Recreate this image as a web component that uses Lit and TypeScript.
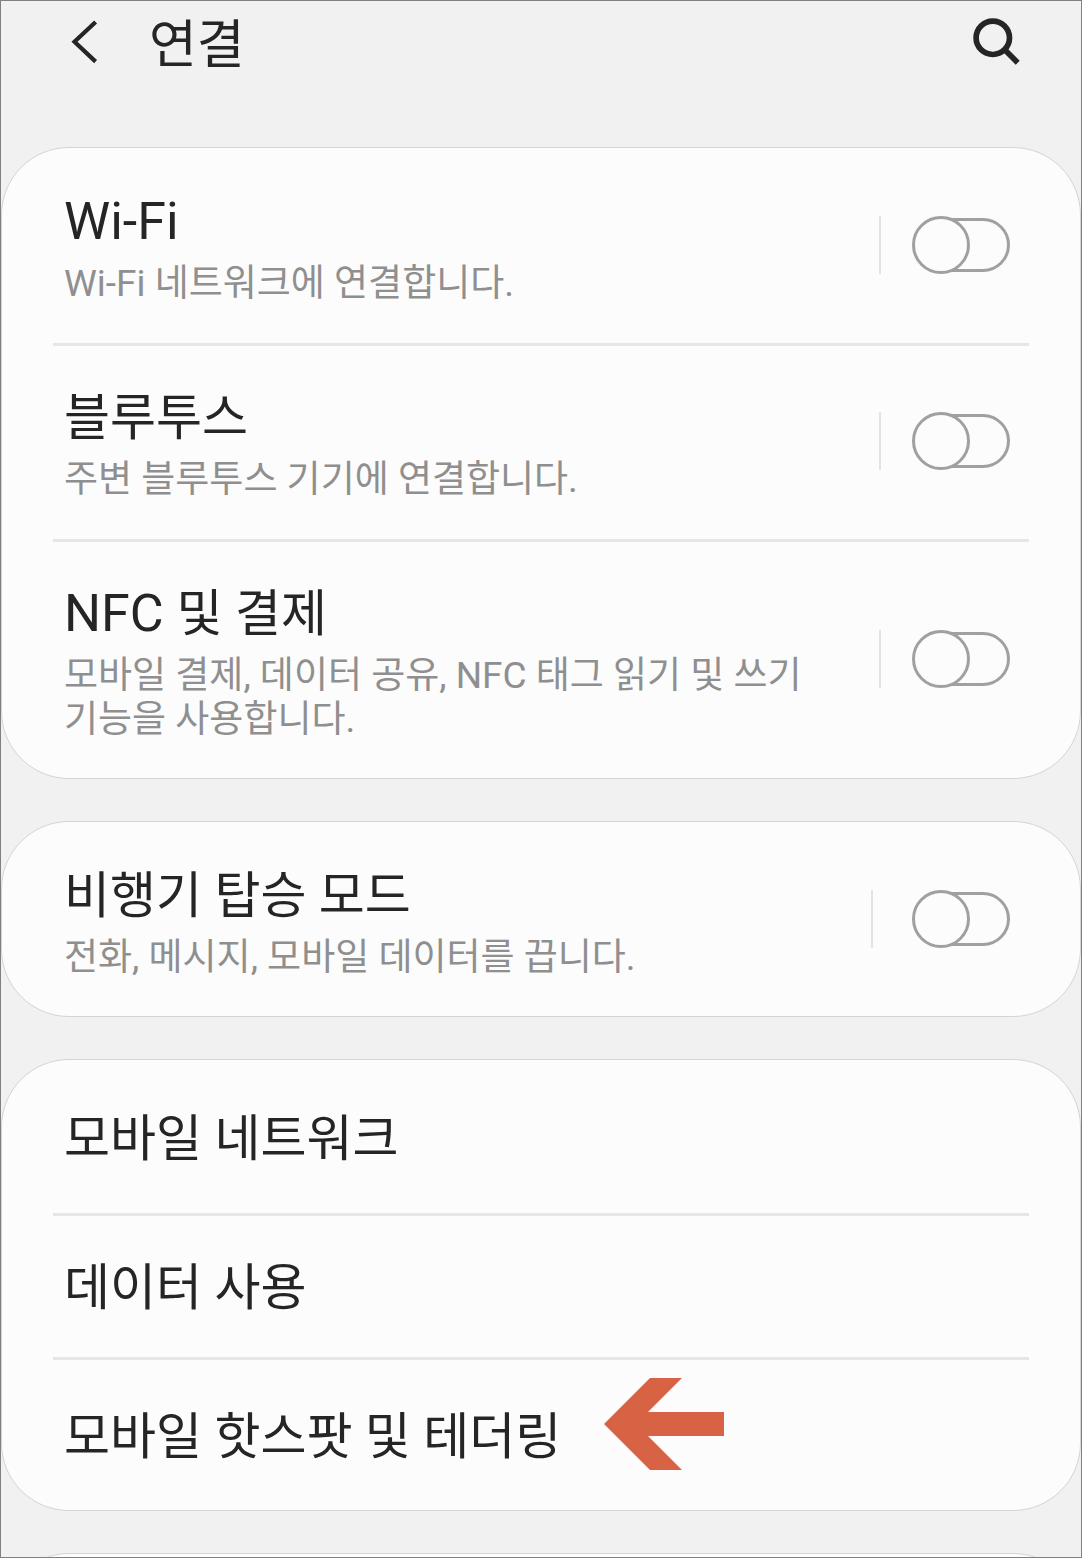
import { LitElement, html, css, nothing } from "lit";
import { customElement, property } from "lit/decorators.js";

interface Setting {
  id: string;
  title: string;
  detail?: string;
  wide?: boolean;
  marked?: boolean;
}

const GROUPS: Setting[][] = [
  [
    { id: "wifi", title: "Wi-Fi", detail: "Wi-Fi 네트워크에 연결합니다." },
    { id: "bluetooth", title: "블루투스", detail: "주변 블루투스 기기에 연결합니다." },
    {
      id: "nfc",
      title: "NFC 및 결제",
      detail: "모바일 결제, 데이터 공유, NFC 태그 읽기 및 쓰기 기능을 사용합니다.",
    },
  ],
  [
    {
      id: "airplane",
      title: "비행기 탑승 모드",
      detail: "전화, 메시지, 모바일 데이터를 끕니다.",
      wide: true,
    },
  ],
  [
    { id: "network", title: "모바일 네트워크" },
    { id: "usage", title: "데이터 사용" },
    { id: "hotspot", title: "모바일 핫스팟 및 테더링", marked: true },
  ],
];

/** Wraps Latin words so that they can be set slightly larger than the Hangul around them. */
const mixed = (text: string) =>
  text
    .split(/([A-Za-z][A-Za-z-]*\s*)/)
    .map((part) => (/^[A-Za-z]/.test(part) ? html`<span class="latin">${part}</span>` : part));

@customElement("setting-toggle-row")
export class SettingToggleRow extends LitElement {
  @property({ attribute: false }) setting!: Setting;

  static styles = css`
    :host {
      display: block;
    }
    .row {
      display: flex;
      align-items: center;
      padding: 39px 70px 36px 62px;
    }
    .text {
      flex: 1;
      min-width: 0;
      display: flex;
      flex-direction: column;
      gap: 7px;
      word-break: keep-all;
    }
    .title {
      font-size: 50px;
      line-height: 66px;
      color: #252525;
    }
    .latin {
      font-size: 52px;
      line-height: 1;
    }
    .detail {
      font-size: 37px;
      line-height: 44px;
      color: #8f8f8f;
    }
    .side {
      flex: none;
      display: flex;
      align-items: center;
      gap: 31px;
      margin-bottom: 5px;
    }
    .side.wide {
      gap: 39px;
    }
    .rule {
      width: 2px;
      height: 58px;
      background: #e4e4e4;
    }
    .switch {
      appearance: none;
      position: relative;
      width: 98px;
      height: 58px;
      margin: 0;
      cursor: pointer;
    }
    .switch::before,
    .switch::after {
      content: "";
      position: absolute;
      box-sizing: border-box;
      border: 3px solid #a0a0a0;
      background: #fcfcfc;
    }
    .switch::before {
      inset: 2px 0 2px 6px;
      border-radius: 27px;
    }
    .switch::after {
      top: 0;
      left: 0;
      width: 58px;
      height: 58px;
      border-radius: 50%;
    }
    .switch:checked::before {
      inset: 2px 6px 2px 0;
      background: #3e91ff;
    }
    .switch:checked::after {
      left: 40px;
    }
  `;

  render() {
    const { id, title, detail, wide } = this.setting;
    return html`
      <div class="row">
        <label class="text" for=${id}>
          <span class="title">${mixed(title)}</span>
          <span class="detail">${detail}</span>
        </label>
        <div class="side ${wide ? "wide" : ""}">
          <span class="rule"></span>
          <input class="switch" type="checkbox" role="switch" id=${id} />
        </div>
      </div>
    `;
  }
}

@customElement("setting-link-row")
export class SettingLinkRow extends LitElement {
  @property({ attribute: false }) setting!: Setting;

  static styles = css`
    :host {
      display: flex;
    }
    .row {
      flex: 1;
      display: flex;
      align-items: center;
      padding: 4px 62px 0;
      gap: 43px;
      font-size: 50px;
      line-height: 66px;
      color: #252525;
      text-decoration: none;
    }
    .arrow {
      flex: none;
      align-self: flex-start;
      width: 120px;
      height: 92px;
      margin-top: 14px;
      fill: #d86344;
    }
  `;

  render() {
    const { id, title, marked } = this.setting;
    return html`
      <a class="row" href="#${id}">
        <span>${title}</span>
        ${marked
          ? html`<svg class="arrow" viewBox="0 0 120 92" aria-hidden="true">
              <path d="M0 46 46 0H78L44 34H120V58H44L78 92H46Z" />
            </svg>`
          : nothing}
      </a>
    `;
  }
}

@customElement("app-root")
export class AppRoot extends LitElement {
  static styles = css`
    :host {
      display: flex;
      flex-direction: column;
      box-sizing: border-box;
      height: 100vh;
      border: 1px solid #808080;
      background: #f1f1f1;
      font-family: Roboto, "Noto Sans CJK KR", sans-serif;
      color: #252525;
    }
    .bar {
      flex: none;
      display: flex;
      align-items: center;
      height: 84px;
      padding: 0 52px 0 61px;
      margin-bottom: 62px;
    }
    .icon-button {
      flex: none;
      display: flex;
      padding: 0;
      border: 0;
      background: none;
      color: inherit;
      cursor: pointer;
    }
    .icon {
      width: 64px;
      height: 64px;
      margin-bottom: 2px;
      fill: none;
      stroke: currentColor;
    }
    .heading {
      flex: 1;
      margin: 0 0 0 23px;
      padding-top: 6px;
      font-size: 52px;
      line-height: 66px;
      font-weight: 400;
    }
    .list {
      flex: 1;
      min-height: 0;
      overflow-y: auto;
      scrollbar-width: none;
      display: flex;
      flex-direction: column;
      gap: 42px;
    }
    .card {
      flex: none;
      padding-top: 2px;
      border: 1px solid #d4d4d4;
      border-radius: 68px;
      background: #fcfcfc;
    }
    .divider {
      height: 3px;
      margin: 1px 51px 0;
      border: 0;
      background: #e6e6e6;
    }
    .link {
      min-height: 140px;
    }
    .link:first-child,
    .link:last-child {
      min-height: 150px;
    }
    .next {
      min-height: 190px;
    }
  `;

  private row(setting: Setting, index: number) {
    return html`${index > 0 ? html`<hr class="divider" />` : nothing}${setting.detail
      ? html`<setting-toggle-row .setting=${setting}></setting-toggle-row>`
      : html`<setting-link-row class="link" .setting=${setting}></setting-link-row>`}`;
  }

  render() {
    return html`
      <header class="bar">
        <button class="icon-button" aria-label="뒤로">
          <svg class="icon" viewBox="0 0 64 64" stroke-width="4.2">
            <path d="M33.6 12 12.5 31.8 33.6 51.6" />
          </svg>
        </button>
        <h1 class="heading">연결</h1>
        <button class="icon-button" aria-label="검색">
          <svg class="icon" viewBox="0 0 64 64" stroke-width="5.7">
            <circle cx="27.8" cy="27.8" r="16.7" />
            <path d="M39.5 39.5 52.7 52.7" stroke-width="5.6" />
          </svg>
        </button>
      </header>
      <main class="list">
        ${GROUPS.map((group) => html`<section class="card">${group.map((s, i) => this.row(s, i))}</section>`)}
        <section class="card next"></section>
      </main>
    `;
  }
}
